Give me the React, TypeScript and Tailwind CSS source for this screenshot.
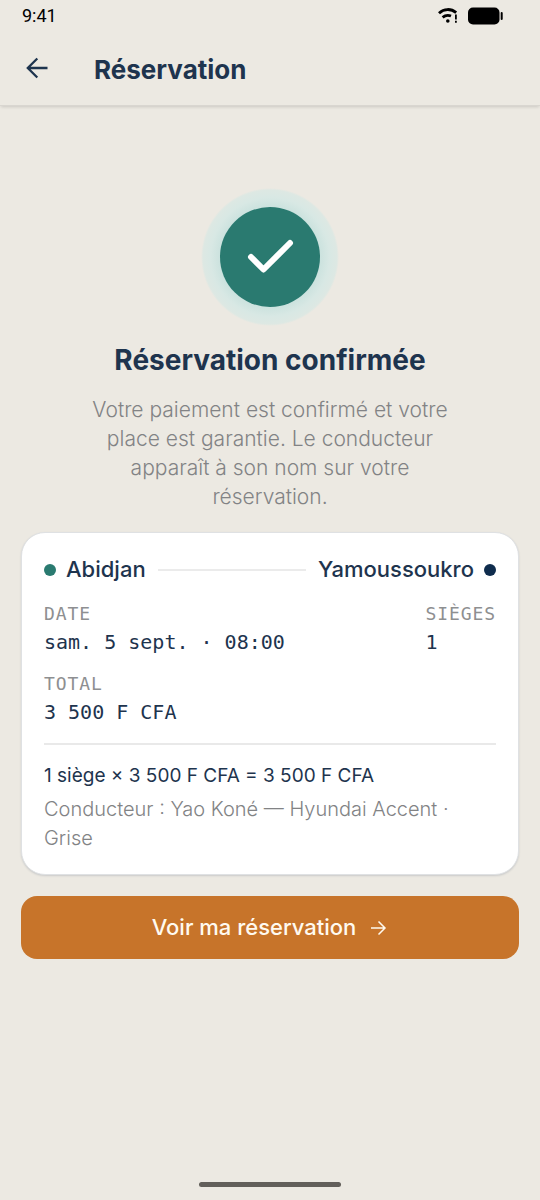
import type { ReactNode } from 'react'
import clsx from 'clsx'

const booking = {
  from: 'Abidjan',
  to: 'Yamoussoukro',
  date: 'sam. 5 sept. · 08:00',
  seats: '1',
  total: '3 500 F CFA',
  breakdown: '1 siège × 3 500 F CFA = 3 500 F CFA',
  driver: 'Conducteur : Yao Koné — Hyundai Accent · Grise',
}

function StatusBar() {
  return (
    <div className="flex h-[31px] items-center justify-between pl-[22px] pr-9 text-black">
      <span className="font-['Roboto',sans-serif] text-lg">9:41</span>
      <div className="flex items-center gap-2">
        <svg width="22" height="18" viewBox="0 0 22 18" fill="none" stroke="currentColor" aria-hidden="true">
          <path d="M1 6.2C6 1.4 13 1.4 18.2 5.6" strokeWidth="2.8" />
          <path d="M4.6 10.4C7.3 8.1 10.2 7.8 13 9" strokeWidth="2.8" />
          <circle cx="9.8" cy="14" r="1.8" fill="currentColor" stroke="none" />
          <path d="M17.9 7.6v4.8M17.9 13.8v2" strokeWidth="1.8" />
        </svg>
        <svg width="36" height="18" viewBox="0 0 36 18" fill="currentColor" aria-hidden="true">
          <rect x="0" y="0.5" width="31.5" height="17" rx="5" />
          <rect x="32.7" y="5" width="2" height="8" rx="1" />
        </svg>
      </div>
    </div>
  )
}

function Header() {
  return (
    <header className="flex h-[75px] items-center border-b border-[#d9d6d0] pl-[22px] shadow-[0_2px_3px_-1px_rgba(0,0,0,0.14)]">
      <button type="button" aria-label="Retour" className="flex size-[30px] items-center justify-center">
        <svg width="30" height="30" viewBox="0 0 30 30" fill="none" stroke="currentColor" strokeWidth="2.3" aria-hidden="true">
          <path d="M25.5 15H6M15.3 5.5L5.8 15l9.5 9.5" />
        </svg>
      </button>
      <h1 className="ml-[42px] pt-1 text-[26px] leading-8 font-bold">Réservation</h1>
    </header>
  )
}

function Field({ label, children }: { label: string; children: ReactNode }) {
  return (
    <div className="flex flex-col gap-0.5 font-['DejaVu_Sans_Mono',monospace]">
      <dt className="text-lg leading-6 tracking-wider text-[#8e8f91]">{label}</dt>
      <dd className="text-xl leading-7">{children}</dd>
    </div>
  )
}

function Dot({ className }: { className?: string }) {
  return <span className={clsx('size-3 shrink-0 rounded-full', className)} />
}

export default function App() {
  return (
    <div className="flex min-h-screen flex-col bg-[#ece9e2] font-['Inter',sans-serif] text-[#1e344e]">
      <StatusBar />
      <Header />

      <main className="flex flex-1 flex-col px-[21px] pt-[82px]">
        <div className="flex flex-col items-center text-center">
          {/* Success badge */}
          <div className="flex size-[138px] items-center justify-center rounded-full bg-[radial-gradient(closest-side,#cbe2de_72%,#d8e8e4_86%,#dde8e3_97%,#ece9e2_100%)]">
            <div className="flex size-[100px] items-center justify-center rounded-full bg-[#2a7a70]">
              <svg width="48" height="36" viewBox="0 0 48 36" fill="none" stroke="white" strokeWidth="6" strokeLinecap="round" strokeLinejoin="round" aria-hidden="true">
                <path d="M5 18L17.5 30.5L44 4" />
              </svg>
            </div>
          </div>
          <h2 className="mt-4 text-[28px] leading-9 font-bold">Réservation confirmée</h2>
          <p className="mt-[17px] max-w-[374px] text-[21px] leading-[29px] font-light text-[#828385]">
            Votre paiement est confirmé et votre place est garantie. Le conducteur apparaît à son nom sur votre réservation.
          </p>
        </div>

        {/* Trip summary */}
        <section className="mt-[21px] rounded-3xl border border-[#dfe1e3] bg-white px-[22px] pt-[22px] pb-[21px] shadow-[0_1px_2px_rgba(30,52,78,0.16)]">
          <div className="flex items-center text-[22px] leading-[29px] font-medium">
            <Dot className="bg-[#2a7a70]" />
            <span className="ml-2.5">{booking.from}</span>
            <span className="mx-3 h-0.5 flex-1 bg-[#ebebeb]" />
            <span className="mr-2.5">{booking.to}</span>
            <Dot className="bg-[#0f2c4d]" />
          </div>

          <dl className="mt-[18px] flex flex-wrap justify-between gap-x-10 gap-y-4">
            <Field label="DATE">{booking.date}</Field>
            <Field label="SIÈGES">{booking.seats}</Field>
            <Field label="TOTAL">{booking.total}</Field>
          </dl>

          <hr className="mt-[17px] border-t-2 border-[#e9e9e9]" />
          <p className="mt-4 text-[19px] leading-[29px]">{booking.breakdown}</p>
          <p className="mt-[5px] text-xl leading-[29px] font-light text-[#828385]">{booking.driver}</p>
        </section>

        <button
          type="button"
          className="mt-[21px] flex h-[63px] items-center justify-center gap-3 rounded-2xl bg-[#c7742a] text-[22px] font-medium text-[#fffaf0]"
        >
          Voir ma réservation
          <svg width="20" height="20" viewBox="0 0 20 20" fill="none" stroke="currentColor" strokeWidth="1.5" aria-hidden="true">
            <path d="M3 10h13.5M10.5 3.5L17 10l-6.5 6.5" />
          </svg>
        </button>
      </main>

      {/* Home indicator */}
      <div className="flex justify-center pb-[13px]">
        <span className="h-[5px] w-[142px] rounded-full bg-[#625f5a]" />
      </div>
    </div>
  )
}
